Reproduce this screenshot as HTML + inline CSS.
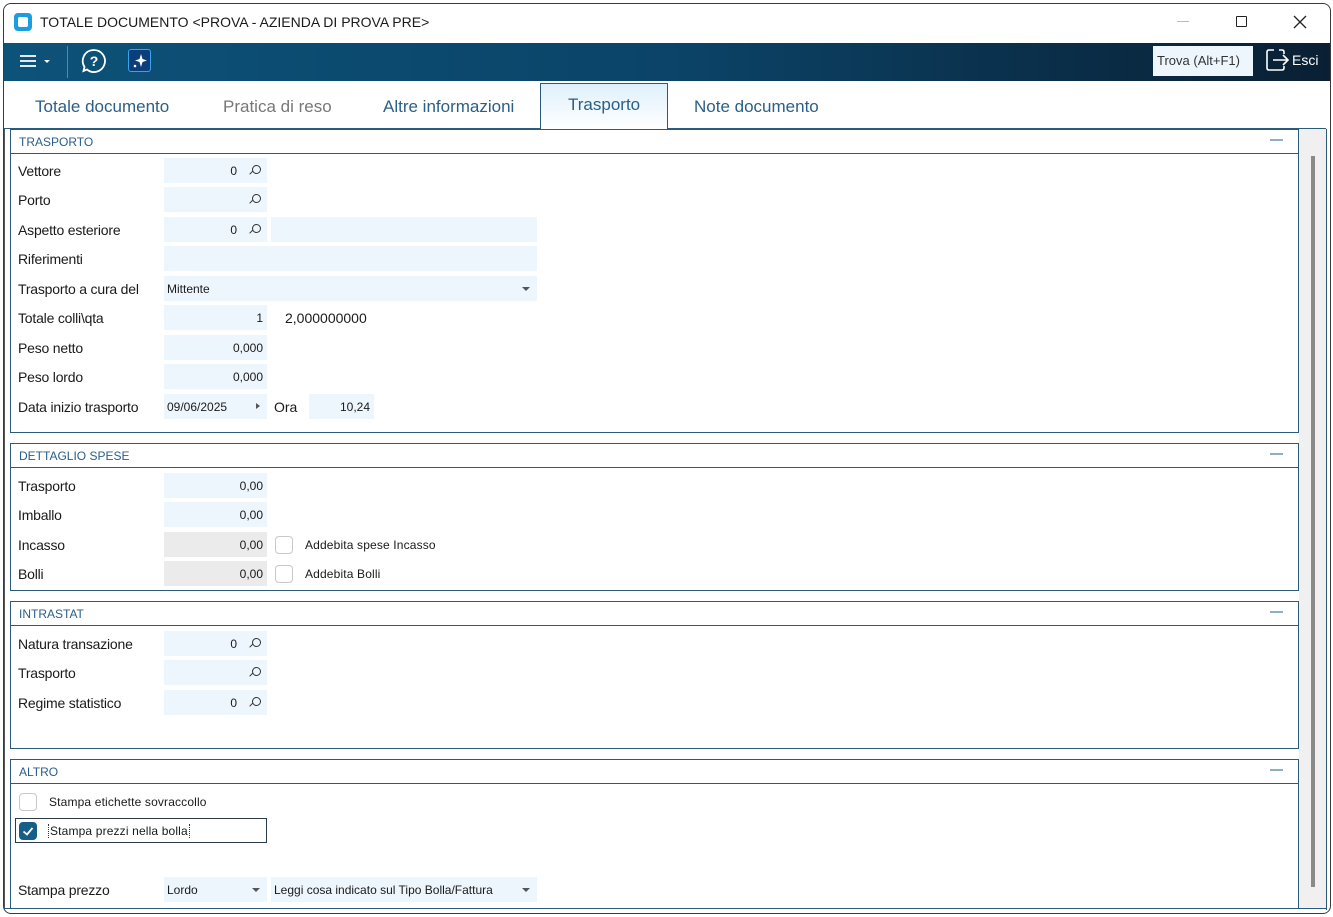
<!DOCTYPE html>
<html><head><meta charset="utf-8">
<style>
*{margin:0;padding:0;box-sizing:border-box}
body{width:1333px;height:917px;background:#fff;position:relative;overflow:hidden;font-family:"Liberation Sans",sans-serif;color:#1a1a1a}
.a{position:absolute}
.lbl{position:absolute;left:18px;font-size:14px;line-height:16px;letter-spacing:-0.2px}
.f{position:absolute;background:#eef6fd;height:25px;font-size:12px;line-height:27px;padding:0 6px;white-space:nowrap}
.g{background:#ebebeb}
.r{text-align:right;padding-right:30px}
.r2{text-align:right;padding-right:4px}
.mag{position:absolute;right:6px;top:7px;width:9px;height:9px;border:1.4px solid #333;border-radius:50%}
.mag:after{content:"";position:absolute;left:-4px;top:6px;width:5px;height:1.4px;background:#333;transform:rotate(-45deg)}
.dd{position:absolute;right:7px;top:11px;border-left:4px solid transparent;border-right:4px solid transparent;border-top:4px solid #555}
.panel{position:absolute;left:10px;width:1289px;border:1px solid #2b5b7a}
.ph{height:24px;border-bottom:1px solid #2b5b7a;font-size:12px;color:#2a5e8a;line-height:24px;padding-left:8px}
.ph:after{content:"";position:absolute;right:15px;top:9px;width:13px;height:2px;background:#8fb0c2}
.cb{position:absolute;width:18px;height:18px;border:1.5px solid #c9c9c9;border-radius:4px;background:#fff}
.t{position:absolute;font-size:12px;line-height:14px;letter-spacing:0.15px}
.tab{position:absolute;top:97px;font-size:17px;color:#2a5f87}
</style></head><body>
<div class="a" style="left:3px;top:3px;width:1328px;height:911px;border:1px solid #3a3a3a;border-radius:8px"></div>
<div class="a" style="left:4px;top:4px;width:1326px;height:39px;background:#fff;border-radius:8px 8px 0 0"></div>
<div class="a" style="left:14px;top:13px;width:18px;height:18px;background:#1a9ee0;border-radius:4px"><div style="position:absolute;left:4px;top:4px;width:10px;height:10px;background:#fff;border-radius:2px"></div></div>
<div class="a" style="left:40px;top:14px;font-size:14px;color:#1a1a1a">TOTALE DOCUMENTO &lt;PROVA - AZIENDA DI PROVA PRE&gt;</div>
<div class="a" style="left:1177px;top:21px;width:12px;height:1px;background:#bbb"></div>
<div class="a" style="left:1236px;top:16px;width:11px;height:11px;border:1.3px solid #222;border-radius:1px"></div>
<svg class="a" style="left:1293px;top:15px" width="14" height="14"><path d="M1 1L13 13M13 1L1 13" stroke="#222" stroke-width="1.3"/></svg>
<div class="a" style="left:4px;top:43px;width:1326px;height:38px;background:linear-gradient(90deg,#0d5279,#0b4468 50%,#0a1f33)"></div>
<svg class="a" style="left:18px;top:52px" width="36" height="20"><path d="M2 4H18M2 9H18M2 14H18" stroke="#fff" stroke-width="1.8"/><path d="M26 8H32L29 11Z" fill="#fff"/></svg>
<div class="a" style="left:67px;top:46px;width:1px;height:32px;background:#5d86a3"></div>
<svg class="a" style="left:81px;top:48px" width="26" height="26"><path d="M13 2A11 11 0 1 1 6 21.5L2.5 23L3.5 19A11 11 0 0 1 13 2Z" fill="none" stroke="#fff" stroke-width="1.8"/><text x="13" y="18" font-size="14" font-weight="bold" fill="#fff" text-anchor="middle" font-family="Liberation Sans">?</text></svg>
<div class="a" style="left:128px;top:49px;width:23px;height:23px;background:#0a3f7c;border:1.5px solid #3ba3e8;border-radius:3px"></div>
<svg class="a" style="left:130px;top:51px" width="19" height="19"><path d="M11 3L12.5 8L17 9.5L12.5 11L11 16L9.5 11L5 9.5L9.5 8Z" fill="#fff"/><circle cx="5" cy="15" r="1.3" fill="#fff"/></svg>
<div class="a" style="left:1153px;top:46px;width:100px;height:30px;background:#eef6fd;font-size:13px;line-height:30px;padding-left:4px;color:#333">Trova (Alt+F1)</div>
<svg class="a" style="left:1265px;top:48px" width="26" height="26"><path d="M9 2H4Q2 2 2 4V20Q2 22 4 22H17Q19 22 19 20V18M19 6V4Q19 2 17 2H14" fill="none" stroke="#fff" stroke-width="1.6"/><path d="M8 12H23M18 7L23 12L18 17" fill="none" stroke="#fff" stroke-width="1.6"/></svg>
<div class="a" style="left:1292px;top:52px;font-size:14px;color:#fff">Esci</div>
<div class="a" style="left:4px;top:128px;width:1322px;height:1px;background:#2b5b7a"></div>
<div class="a" style="left:540px;top:83px;width:128px;height:46px;border:1px solid #2b5b7a;border-bottom:none;background:linear-gradient(#dff0fb,#fff)"></div>
<div class="tab" style="left:35px">Totale documento</div>
<div class="tab" style="left:223px;color:#777">Pratica di reso</div>
<div class="tab" style="left:383px">Altre informazioni</div>
<div class="tab" style="left:568px;top:95px">Trasporto</div>
<div class="tab" style="left:694px">Note documento</div>
<div class="a" style="left:4px;top:129px;width:1px;height:780px;background:#555"></div>
<div class="a" style="left:1299px;top:129px;width:27px;height:779px;background:#f0f0f0"></div>
<div class="a" style="left:1326px;top:129px;width:1px;height:781px;background:#2b5b7a"></div>
<div class="a" style="left:1311px;top:156px;width:4px;height:731px;background:#8a8a8a"></div>
<div class="a" style="left:4px;top:908px;width:1323px;height:1px;background:#2b5b7a"></div>

<div class="panel" style="top:129px;height:304px"><div class="ph">TRASPORTO</div></div>
<div class="lbl" style="top:163px">Vettore</div><div class="f r" style="left:164px;top:158px;width:103px">0<span class="mag"></span></div>
<div class="lbl" style="top:192px">Porto</div><div class="f r" style="left:164px;top:187px;width:103px"><span class="mag"></span></div>
<div class="lbl" style="top:222px">Aspetto esteriore</div><div class="f r" style="left:164px;top:217px;width:103px">0<span class="mag"></span></div><div class="f" style="left:271px;top:217px;width:266px"></div>
<div class="lbl" style="top:251px">Riferimenti</div><div class="f" style="left:164px;top:246px;width:373px"></div>
<div class="lbl" style="top:281px">Trasporto a cura del</div><div class="f" style="left:164px;top:276px;width:373px;padding-left:3px">Mittente<span class="dd"></span></div>
<div class="lbl" style="top:310px">Totale colli\qta</div><div class="f r2" style="left:164px;top:305px;width:103px">1</div><div class="a" style="left:285px;top:310px;font-size:14px">2,000000000</div>
<div class="lbl" style="top:340px">Peso netto</div><div class="f r2" style="left:164px;top:335px;width:103px">0,000</div>
<div class="lbl" style="top:369px">Peso lordo</div><div class="f r2" style="left:164px;top:364px;width:103px">0,000</div>
<div class="lbl" style="top:399px">Data inizio trasporto</div><div class="f" style="left:164px;top:394px;width:103px;padding-left:3px">09/06/2025<span style="position:absolute;right:7px;top:9px;border-top:3.5px solid transparent;border-bottom:3.5px solid transparent;border-left:4px solid #555"></span></div>
<div class="a" style="left:274px;top:399px;font-size:14px">Ora</div><div class="f r2" style="left:309px;top:394px;width:65px">10,24</div>

<div class="panel" style="top:443px;height:148px"><div class="ph">DETTAGLIO SPESE</div></div>
<div class="lbl" style="top:478px">Trasporto</div><div class="f r2" style="left:164px;top:473px;width:103px">0,00</div>
<div class="lbl" style="top:507px">Imballo</div><div class="f r2" style="left:164px;top:502px;width:103px">0,00</div>
<div class="lbl" style="top:537px">Incasso</div><div class="f r2 g" style="left:164px;top:532px;width:103px">0,00</div>
<div class="cb" style="left:275px;top:536px"></div><div class="t" style="left:305px;top:538px">Addebita spese Incasso</div>
<div class="lbl" style="top:566px">Bolli</div><div class="f r2 g" style="left:164px;top:561px;width:103px">0,00</div>
<div class="cb" style="left:275px;top:565px"></div><div class="t" style="left:305px;top:567px">Addebita Bolli</div>

<div class="panel" style="top:601px;height:148px"><div class="ph">INTRASTAT</div></div>
<div class="lbl" style="top:636px">Natura transazione</div><div class="f r" style="left:164px;top:631px;width:103px">0<span class="mag"></span></div>
<div class="lbl" style="top:665px">Trasporto</div><div class="f r" style="left:164px;top:660px;width:103px"><span class="mag"></span></div>
<div class="lbl" style="top:695px">Regime statistico</div><div class="f r" style="left:164px;top:690px;width:103px">0<span class="mag"></span></div>

<div class="panel" style="top:759px;height:150px"><div class="ph">ALTRO</div></div>
<div class="cb" style="left:19px;top:793px"></div><div class="t" style="left:49px;top:795px">Stampa etichette sovraccollo</div>
<div class="a" style="left:15px;top:818px;width:252px;height:25px;border:1.5px solid #2b3b4a"></div>
<div class="a" style="left:19px;top:822px;width:18px;height:18px;background:#175d8a;border-radius:4px"></div>
<svg class="a" style="left:19px;top:822px" width="18" height="18"><path d="M4.5 9.5L8 12.5L13.5 6" fill="none" stroke="#fff" stroke-width="1.8"/></svg>
<div class="t" style="left:48px;top:824px;border-left:1px dotted #333;border-right:1px dotted #333;padding:0 1px">Stampa prezzi nella bolla</div>
<div class="lbl" style="top:882px">Stampa prezzo</div>
<div class="f" style="left:164px;top:877px;width:103px;padding-left:3px">Lordo<span class="dd"></span></div>
<div class="f" style="left:271px;top:877px;width:266px;padding-left:3px">Leggi cosa indicato sul Tipo Bolla/Fattura<span class="dd"></span></div>
</body></html>
